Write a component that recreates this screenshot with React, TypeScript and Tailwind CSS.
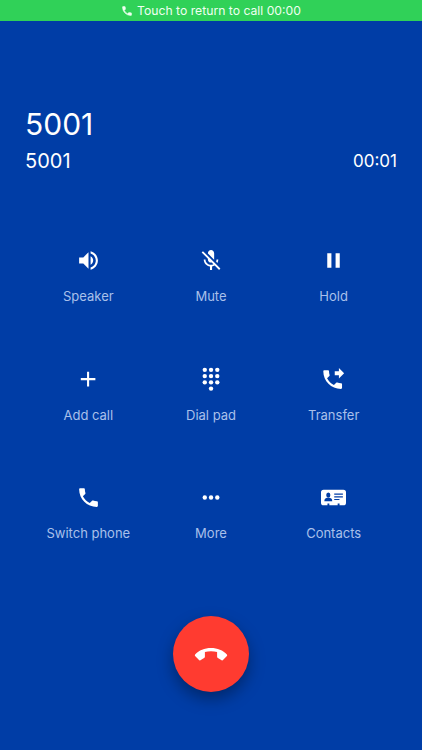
import type { ReactNode } from "react";

const PHONE =
  "M6.62 10.79c1.44 2.83 3.76 5.14 6.59 6.59l2.2-2.2c.27-.27.67-.36 1.02-.24 1.12.37 2.33.57 3.57.57.55 0 1 .45 1 1V20c0 .55-.45 1-1 1-9.39 0-17-7.61-17-17 0-.55.45-1 1-1h3.5c.55 0 1 .45 1 1 0 1.25.2 2.45.57 3.57.11.35.03.74-.25 1.02l-2.2 2.2z";

type Action = { label: string; icon: ReactNode };

const Icon = ({ children }: { children: ReactNode }) => (
  <svg viewBox="0 0 24 24" className="size-[25px] overflow-visible" fill="currentColor">
    {children}
  </svg>
);

const actions: Action[] = [
  {
    label: "Speaker",
    icon: (
      <path d="M3 9v6h4l5 5V4L7 9H3zm13.5 3c0-1.77-1.02-3.29-2.5-4.03v8.05c1.48-.73 2.5-2.25 2.5-4.02zM14 3.23v2.06c2.89.86 5 3.54 5 6.71s-2.11 5.85-5 6.71v2.06c4.01-.91 7-4.49 7-8.77s-2.99-7.86-7-8.77z" />
    ),
  },
  {
    label: "Mute",
    icon: (
      <path
        transform="translate(.5 0)"
        d="M19 11h-1.7c0 .74-.16 1.43-.43 2.05l1.23 1.23c.56-.98.9-2.09.9-3.28zm-4.02.17c0-.06.02-.11.02-.17V5c0-1.66-1.34-3-3-3S9 3.34 9 5v.18l5.98 5.99zM4.27 3L3 4.27l6.01 6.01V11c0 1.66 1.33 3 2.99 3 .22 0 .44-.03.65-.08l1.66 1.66c-.71.33-1.5.52-2.31.52-2.76 0-5.3-2.1-5.3-5.1H5c0 3.41 2.72 6.23 6 6.72V21h2v-3.28c.91-.13 1.77-.45 2.54-.9L19.73 21 21 19.73 4.27 3z"
      />
    ),
  },
  { label: "Hold", icon: <path d="M6 19h4V5H6v14zm8-14v14h4V5h-4z" /> },
  { label: "Add call", icon: <path transform="translate(-.4 -.4)" d="M19 13h-6v6h-2v-6H5v-2h6V5h2v6h6v2z" /> },
  {
    label: "Dial pad",
    icon: (
      <g transform="translate(.5 -.3)">
        {[3, 9, 15].map((y) =>
          [6, 12, 18].map((x) => <circle key={`${x}-${y}`} cx={x} cy={y} r="2.1" />)
        )}
        <circle cx="12" cy="21" r="2.1" />
      </g>
    ),
  },
  {
    label: "Transfer",
    icon: (
      <g transform="translate(-.8 0)">
        <path d="M18 11l5-5-5-5v3h-4v4h4v3z" />
        <path d={PHONE} />
      </g>
    ),
  },
  { label: "Switch phone", icon: <path d={PHONE} /> },
  {
    label: "More",
    icon: (
      <g transform="translate(.5 0)">
        <circle cx="6" cy="12" r="2.1" />
        <circle cx="12" cy="12" r="2.1" />
        <circle cx="18" cy="12" r="2.1" />
      </g>
    ),
  },
  {
    label: "Contacts",
    icon: (
      <>
        <path d="M2.500 4.500h19a2.500 2.500 0 0 1 2.500 2.500v10a2.500 2.500 0 0 1-2.500 2.500h-3.700v-1.800h-1.800v1.800H8v-1.800H6.200v1.800H2.500a2.500 2.500 0 0 1-2.500-2.500v-10a2.500 2.500 0 0 1 2.500-2.500z" />
        <g fill="#003da6">
          <ellipse cx="7" cy="9.700" rx="2" ry="2.500" />
          <path d="M3.200 15.500c0-2.200 1-2.900 2.500-3.300h2.600c1.500.4 2.500 1.100 2.500 3.300z" />
          <path d="M12.700 8.200h8.300v1.100h-8.300zM12.700 10.800h8.300v1.100h-8.300zM12.700 13.400h5v1.100h-5z" />
        </g>
      </>
    ),
  },
];

const ActionButton = ({ label, icon }: Action) => (
  <button className="flex flex-col items-center">
    <Icon>{icon}</Icon>
    <span className="mt-[13px] whitespace-nowrap text-[13px] leading-5 text-[#a9c0ea]">{label}</span>
  </button>
);

export default function App() {
  return (
    <div className="flex h-[750px] w-full flex-col bg-[#003da6] font-['Inter','Liberation_Sans',sans-serif] text-white">
      <div className="flex h-[21px] items-center justify-center gap-1 bg-[#30d158] text-[12.2px] leading-5 text-[#effff1]">
        <svg viewBox="0 0 24 24" className="size-3" fill="currentColor" stroke="currentColor">
          <path d={PHONE} />
        </svg>
        <span className="pt-px">Touch to return to call 00:00</span>
      </div>

      <header className="px-[25px] pt-[83px]">
        <h1 className="text-[30px] leading-10">5001</h1>
        <div className="flex items-center justify-between pt-px leading-8">
          <span className="text-[20px]">5001</span>
          <span className="text-[17px]">00:01</span>
        </div>
      </header>

      <main className="mt-[71px] grid auto-rows-[118.5px] grid-cols-3 px-[27px]">
        {actions.map((action) => (
          <ActionButton key={action.label} {...action} />
        ))}
      </main>

      <div className="mt-3 flex justify-center">
        <button
          aria-label="End call"
          className="flex size-[76.5px] items-center justify-center rounded-full bg-[#ff3b30] shadow-[0_7px_16px_rgba(0,0,0,0.35)]"
        >
          <svg viewBox="0 0 33 13" className="h-[13px] w-[33px] overflow-visible" fill="currentColor">
            <path
              transform="translate(-.5 .8)"
              d="M.6 6.800C4.500 2.600 10 .3 16.500.3S28.500 2.600 32.400 6.800c.4.500.4.900 0 1.300l-3.900 4.200c-.4.400-.9.400-1.400.1l-3.700-2.100c-.5-.3-.8-.7-.8-1.300V4.200C20.800 3.600 18.600 3.400 16.500 3.400S12.200 3.600 10.400 4.200V9c0 .6-.3 1-.8 1.300l-3.700 2.100c-.5.300-1 .3-1.400-.1L.6 8.100c-.4-.4-.4-.8 0-1.300z"
            />
          </svg>
        </button>
      </div>
    </div>
  );
}
